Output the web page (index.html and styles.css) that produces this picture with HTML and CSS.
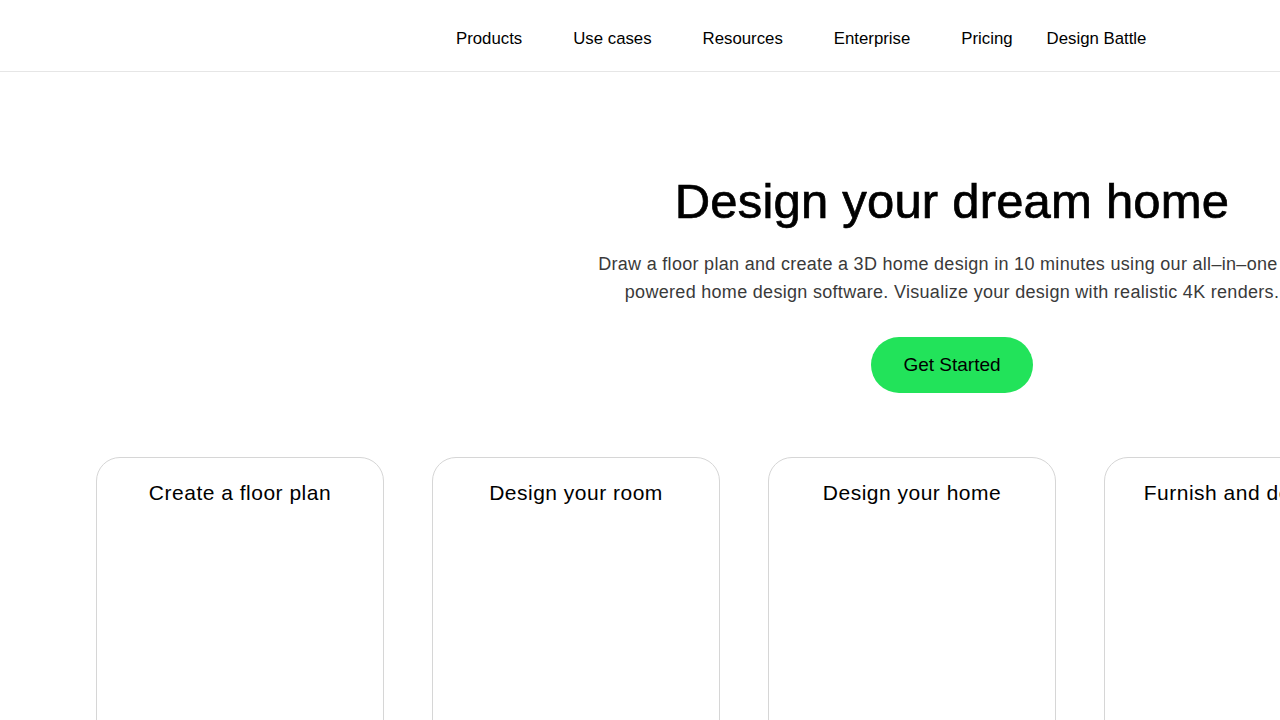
FILE: index.html
```html
<!DOCTYPE html>
<html lang="en">
<head>
<meta charset="utf-8">
<title>Design your dream home</title>
<link rel="stylesheet" href="styles.css">
</head>
<body>
<header class="site-header">
  <nav class="main-nav">
    <a class="nav-item has-menu" href="#">Products</a>
    <a class="nav-item has-menu" href="#">Use cases</a>
    <a class="nav-item has-menu" href="#">Resources</a>
    <a class="nav-item has-menu" href="#">Enterprise</a>
    <a class="nav-item" href="#">Pricing</a>
    <a class="nav-item" href="#">Design Battle</a>
  </nav>
</header>

<main class="page">
  <section class="hero">
    <h1 class="hero-title">Design your dream home</h1>
    <p class="hero-text">Draw a floor plan and create a 3D home design in 10 minutes using our all&#8211;in&#8211;one AI-powered home design software. Visualize your design with realistic 4K renders.</p>
    <a class="cta" href="#">Get Started</a>
  </section>

  <section class="features">
    <article class="feature-card"><h2 class="feature-title">Create a floor plan</h2></article>
    <article class="feature-card"><h2 class="feature-title">Design your room</h2></article>
    <article class="feature-card"><h2 class="feature-title">Design your home</h2></article>
    <article class="feature-card"><h2 class="feature-title">Furnish and decorate</h2></article>
    <article class="feature-card"><h2 class="feature-title">Render in 4K</h2></article>
  </section>
</main>
</body>
</html>
```

FILE: styles.css
```css
html, body {
  margin: 0;
  padding: 0;
  overflow-x: hidden;
  background: #fff;
}

body {
  font-family: "Liberation Sans", Arial, sans-serif;
  color: #000;
}

a {
  color: inherit;
  text-decoration: none;
}

/* top bar */
.site-header {
  height: 72px;
  border-bottom: 1px solid #e6e6e6;
  box-sizing: border-box;
  display: flex;
  align-items: center;
  padding-left: 456px;
}

.main-nav {
  display: flex;
  align-items: center;
  gap: 34px;
  padding-top: 6px;
}

.nav-item {
  font-size: 16.8px;
  line-height: 24px;
  color: #000;
}

.nav-item.has-menu {
  padding-right: 17px;
}

/* wide page body, centred content overflows the window */
.page {
  width: 1904px;
}

.hero {
  display: flex;
  flex-direction: column;
  align-items: center;
  padding-top: 99px;
  text-align: center;
}

.hero-title {
  margin: 0;
  font-size: 49px;
  line-height: 60px;
  font-weight: 400;
  -webkit-text-stroke: 0.7px #000;
  letter-spacing: 0.2px;
}

.hero-text {
  margin: 19px 0 0;
  max-width: 720px;
  font-size: 18px;
  line-height: 28px;
  letter-spacing: 0.3px;
  color: #3a3a3a;
}

.cta {
  margin-top: 31px;
  height: 56px;
  padding: 0 32px;
  border-radius: 28px;
  background: #22e35a;
  display: flex;
  align-items: center;
  font-size: 19px;
  color: #000;
}

/* feature cards */
.features {
  display: flex;
  gap: 48px;
  padding: 64px 0 0 96px;
}

.feature-card {
  flex: 0 0 288px;
  height: 420px;
  box-sizing: border-box;
  border: 1px solid #d6d6d6;
  border-radius: 24px;
  padding-top: 22px;
  text-align: center;
}

.feature-title {
  margin: 0;
  font-size: 21px;
  line-height: 26px;
  font-weight: 400;
  letter-spacing: 0.5px;
}
```
